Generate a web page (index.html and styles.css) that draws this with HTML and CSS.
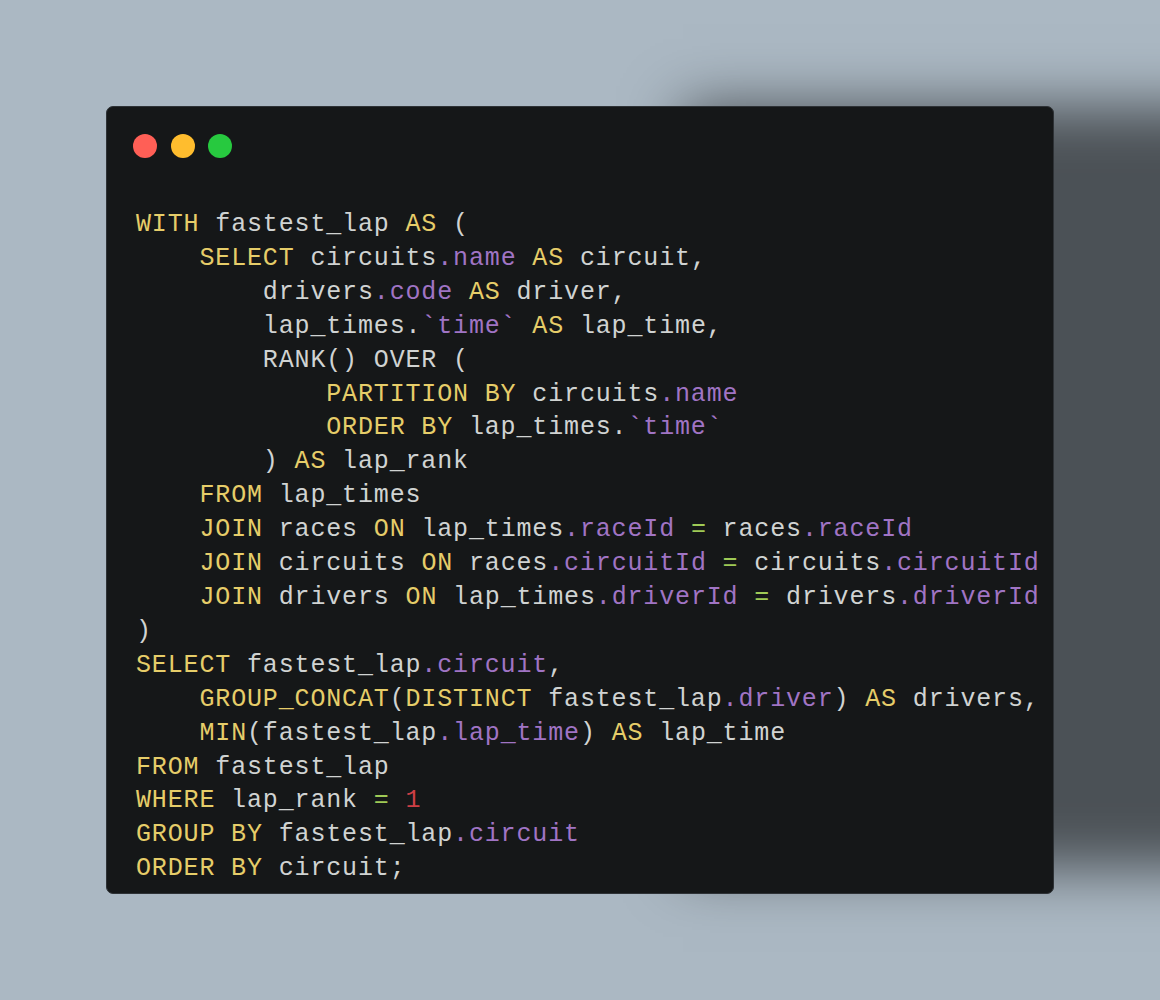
FILE: index.html
```html
<!DOCTYPE html>
<html lang="en">
<head>
<meta charset="utf-8">
<title>SQL snippet</title>
<link rel="stylesheet" href="styles.css">
</head>
<body>
<main class="stage">
  <section class="window">
    <div class="controls">
      <span class="dot dot-red"></span>
      <span class="dot dot-yellow"></span>
      <span class="dot dot-green"></span>
    </div>
<pre class="code"><span class="kw">WITH</span> fastest_lap <span class="kw">AS</span> (
    <span class="kw">SELECT</span> circuits<span class="pr">.name</span> <span class="kw">AS</span> circuit,
        drivers<span class="pr">.code</span> <span class="kw">AS</span> driver,
        lap_times.<span class="pr">`time`</span> <span class="kw">AS</span> lap_time,
        RANK() OVER (
            <span class="kw">PARTITION BY</span> circuits<span class="pr">.name</span>
            <span class="kw">ORDER BY</span> lap_times.<span class="pr">`time`</span>
        ) <span class="kw">AS</span> lap_rank
    <span class="kw">FROM</span> lap_times
    <span class="kw">JOIN</span> races <span class="kw">ON</span> lap_times<span class="pr">.raceId</span> <span class="op">=</span> races<span class="pr">.raceId</span>
    <span class="kw">JOIN</span> circuits <span class="kw">ON</span> races<span class="pr">.circuitId</span> <span class="op">=</span> circuits<span class="pr">.circuitId</span>
    <span class="kw">JOIN</span> drivers <span class="kw">ON</span> lap_times<span class="pr">.driverId</span> <span class="op">=</span> drivers<span class="pr">.driverId</span>
)
<span class="kw">SELECT</span> fastest_lap<span class="pr">.circuit</span>,
    <span class="kw">GROUP_CONCAT</span>(<span class="kw">DISTINCT</span> fastest_lap<span class="pr">.driver</span>) <span class="kw">AS</span> drivers,
    <span class="kw">MIN</span>(fastest_lap<span class="pr">.lap_time</span>) <span class="kw">AS</span> lap_time
<span class="kw">FROM</span> fastest_lap
<span class="kw">WHERE</span> lap_rank <span class="op">=</span> <span class="num">1</span>
<span class="kw">GROUP BY</span> fastest_lap<span class="pr">.circuit</span>
<span class="kw">ORDER BY</span> circuit;</pre>
  </section>
</main>
</body>
</html>
```
FILE: styles.css
```css
html, body {
  margin: 0;
  padding: 0;
  background: #abb8c3;
}

body {
  width: 1160px;
  height: 1000px;
  overflow: hidden;
}

.stage {
  padding: 106px 0 0 106px;
}

.window {
  box-sizing: border-box;
  width: 948px;
  height: 788px;
  background: #151718;
  border: 1px solid #2e3236;
  border-radius: 7px;
  padding: 27px 0 0 26px;
  box-shadow: 565px -12px 55px -12px rgba(0, 0, 0, 0.56);
}

.controls {
  display: flex;
  gap: 13.5px;
  height: 24px;
}

.dot {
  width: 24px;
  height: 24px;
  border-radius: 50%;
  display: block;
}

.dot-red { background: #ff5f56; }
.dot-yellow { background: #ffbd2e; }
.dot-green { background: #27c93f; }

.code {
  margin: 50px 0 0 3px;
  font-family: "Liberation Mono", "DejaVu Sans Mono", monospace;
  font-size: 25px;
  letter-spacing: 0.85px;
  line-height: 33.9px;
  color: #d0d3d2;
  white-space: pre;
}

.kw { color: #e6cd69; }
.pr { color: #a074c4; }
.op { color: #9fca56; }
.num { color: #cd3f45; }
```
